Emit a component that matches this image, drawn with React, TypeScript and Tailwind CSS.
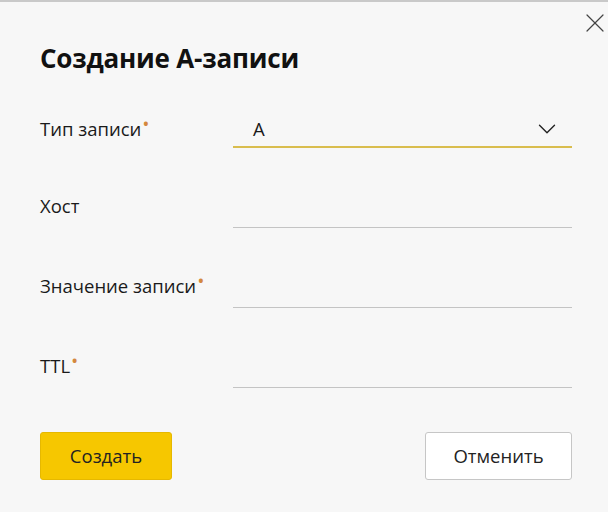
import { ChevronDown, X } from "lucide-react";

const FIELDS: { label: string; required: boolean }[] = [
  { label: "Хост", required: false },
  { label: "Значение записи", required: true },
  { label: "TTL", required: true },
];

function Label({ text, required, shift }: { text: string; required: boolean; shift: string }) {
  return (
    <div className={`w-[193px] flex-shrink-0 text-[18.5px] text-[#1a1a1a] leading-none ${shift}`}>
      {text}
      {required && (
        <span className="relative -top-[7px] ml-[2px] text-[14px] font-bold text-[#d4883e]">•</span>
      )}
    </div>
  );
}

export default function App() {
  return (
    <div
      className="relative w-[608px] h-[512px] bg-[#f7f7f7] border-t-2 border-[#c9c9c9] pl-[40px] pr-[36px] pt-[40px]"
      style={{ fontFamily: '"Open Sans", "Noto Sans", sans-serif' }}
    >
      {/* Close button */}
      <button className="absolute top-[5px] left-[579px] text-[#444]">
        <X size={32} strokeWidth={0.9} />
      </button>

      <h1 className="h-[32px] text-[26px] font-bold text-[#111] leading-[32px] tracking-[-0.2px]">
        Создание А-записи
      </h1>

      <div className="mt-[34px] flex flex-col gap-[40px]">
        {/* Select row */}
        <div className="flex items-center h-[40px]">
          <Label text="Тип записи" required shift="mt-[3px]" />
          <div className="flex-1 h-[40px] flex items-center justify-between border-b-2 border-[#d9bd4e] pl-[20px] pr-[10px]">
            <span className="text-[18.5px] text-[#1a1a1a] mt-[3px]">A</span>
            <ChevronDown size={30} strokeWidth={1.1} className="text-[#222] mt-[3px]" />
          </div>
        </div>

        {FIELDS.map((f) => (
          <div key={f.label} className="flex items-center h-[40px]">
            <Label text={f.label} required={f.required} shift="-mt-[4px]" />
            <div className="flex-1 h-[40px] border-b border-[#c4c4c4]" />
          </div>
        ))}
      </div>

      <div className="mt-[44px] flex justify-between">
        <button className="w-[132px] h-[48px] rounded-[3px] bg-[#f6c700] border border-[#e6b800] text-[18.5px] text-[#222]">
          Создать
        </button>
        <button className="w-[147px] h-[48px] rounded-[3px] bg-white border border-[#c6c6c6] text-[18.5px] text-[#222]">
          Отменить
        </button>
      </div>
    </div>
  );
}
